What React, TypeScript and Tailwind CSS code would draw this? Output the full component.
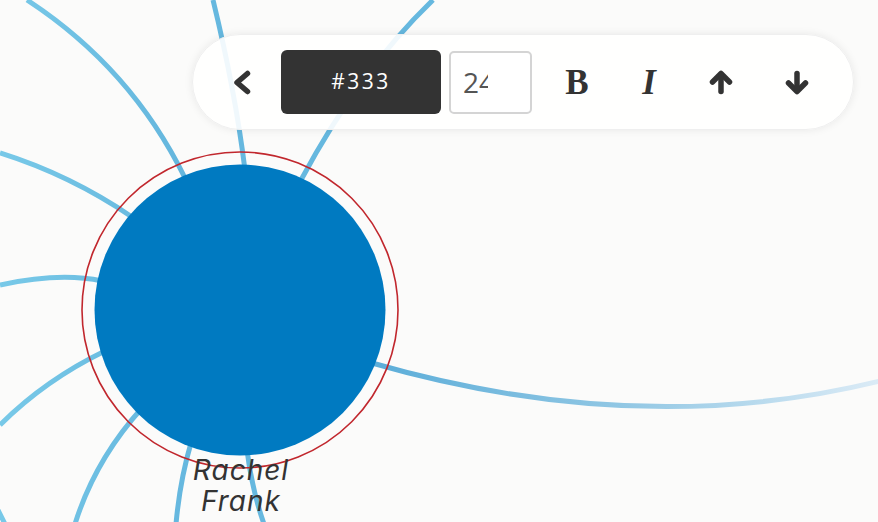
import React from "react";

function Chevron() {
  return (
    <svg width="18" height="25" viewBox="0 0 18 25">
      <polyline points="14.5,3.5 4,12.5 14.5,21.5" fill="none" stroke="#333" strokeWidth="5.5" strokeLinecap="round" strokeLinejoin="round" />
    </svg>
  );
}

function Arrow({ down }: { down?: boolean }) {
  return (
    <svg width="24" height="25" viewBox="0 0 24 25" style={{ transform: down ? "rotate(180deg)" : undefined }}>
      <g fill="none" stroke="#333" strokeWidth="5.5" strokeLinecap="round" strokeLinejoin="round">
        <polyline points="3.5,12 12,3.5 20.5,12" />
        <line x1="12" y1="5" x2="12" y2="21.5" />
      </g>
    </svg>
  );
}

export default function App() {
  const line = "#66b8df";
  return (
    <div className="relative w-[878px] h-[522px] overflow-hidden bg-[#fbfbfa]">
      <svg className="absolute left-0 top-0" width="878" height="522" viewBox="0 0 878 522">
        <defs>
          <linearGradient id="rg" gradientUnits="userSpaceOnUse" x1="380" y1="0" x2="878" y2="0">
            <stop offset="0" stopColor="#5daed9" />
            <stop offset="0.5" stopColor="#93c8e4" />
            <stop offset="1" stopColor="#dbebf6" />
          </linearGradient>
          <linearGradient id="lg" gradientUnits="userSpaceOnUse" x1="0" y1="0" x2="240" y2="0">
            <stop offset="0" stopColor="#78c9e8" />
            <stop offset="1" stopColor="#5eb0da" />
          </linearGradient>
        </defs>
        <g fill="none" strokeWidth="5" strokeLinecap="butt">
          <path d="M 27 0 Q 131 68 185 178" stroke="url(#lg)" />
          <path d="M 213 0 Q 235 90 245 170" stroke={line} />
          <path d="M 433 0 Q 360 70 301 180" stroke={line} />
          <path d="M 0 153 Q 70 175 132 217" stroke="url(#lg)" />
          <path d="M 0 285 Q 60 272 102 281" stroke="url(#lg)" />
          <path d="M 0 425 Q 45 380 105 351" stroke="url(#lg)" />
          <path d="M 75 524 Q 95 460 142 408" stroke="url(#lg)" />
          <path d="M 176 524 Q 180 480 191 443" stroke={line} />
          <path d="M 264 524 Q 252 490 247 450" stroke={line} />
          <path d="M -3 508 L 6 526" stroke="#78c9e8" />
          <path d="M 372 363 Q 640 440 880 381" stroke="url(#rg)" />
        </g>
        <circle cx="240" cy="310" r="158" fill="none" stroke="#c1272d" strokeWidth="1.6" />
        <circle cx="240" cy="310" r="145.5" fill="#007ac1" />
      </svg>

      <div
        className="absolute left-[141px] top-[455px] w-[200px] text-center italic font-normal text-[#333] text-[28px] leading-[31px] tracking-[1px]"
        style={{ fontFamily: "Inter, 'Open Sans', sans-serif" }}
      >
        <div>Rachel</div>
        <div>Frank</div>
      </div>

      <div className="absolute left-[192px] top-[34px] w-[662px] h-[96px] rounded-full bg-white/90 shadow-[0_0_8px_rgba(0,0,0,0.08)] border border-[#efefef] flex items-center">
        <div className="w-[88px] flex justify-end pr-[30px]">
          <Chevron />
        </div>
        <div
          className="w-[160px] h-[64px] rounded-[6px] bg-[#333] text-white flex items-center justify-center text-[21px] tracking-[2.5px]"
          style={{ fontFamily: "'Open Sans', sans-serif" }}
        >
          #333
        </div>
        <div className="ml-[8px] w-[83px] h-[63px] rounded-[5px] border-2 border-[#d4d4d4] bg-white flex items-center pl-[12px]">
          <div
            className="w-[25px] overflow-hidden whitespace-nowrap text-[28px] text-[#555]"
            style={{ fontFamily: "'Open Sans', sans-serif" }}
          >
            24
          </div>
        </div>
        <div
          className="ml-[9px] w-[72px] flex justify-center text-[#333] font-bold text-[35px] leading-none"
          style={{ fontFamily: "'Liberation Serif', serif" }}
        >
          B
        </div>
        <div
          className="w-[72px] flex justify-center text-[#333] font-bold italic text-[35px] leading-none"
          style={{ fontFamily: "'Liberation Serif', serif" }}
        >
          I
        </div>
        <div className="w-[72px] flex justify-center">
          <Arrow />
        </div>
        <div className="w-[80px] flex justify-center">
          <Arrow down />
        </div>
      </div>
    </div>
  );
}
